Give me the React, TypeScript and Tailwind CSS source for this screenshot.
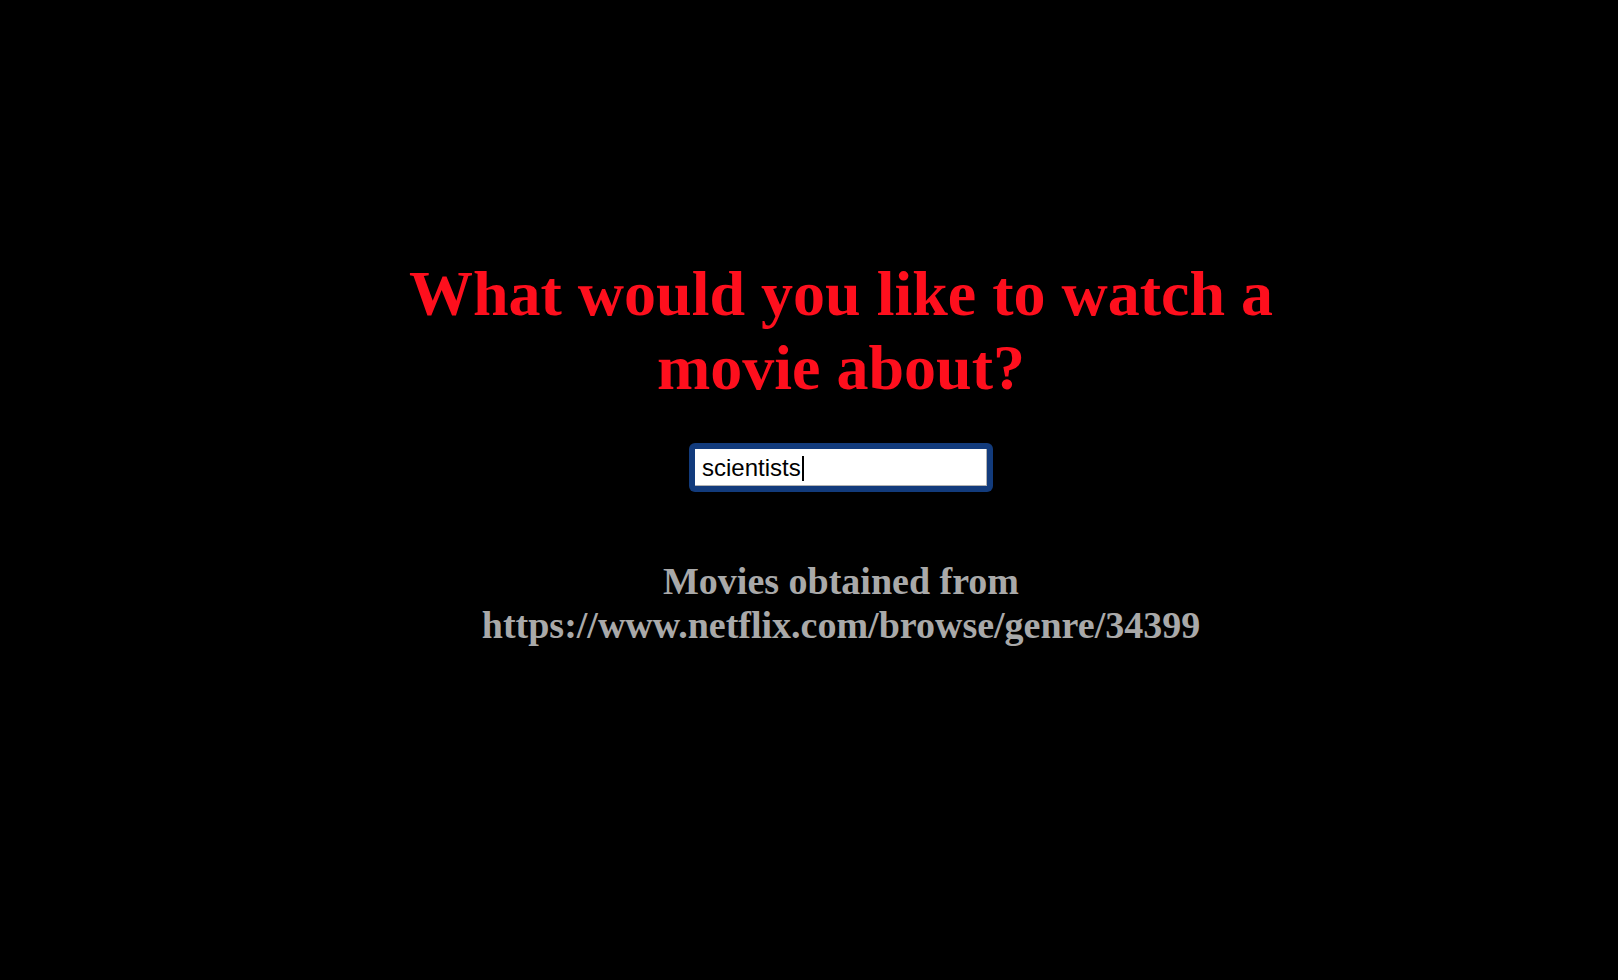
import React from "react";

export default function App() {
  return (
    <div className="min-h-screen w-full bg-black pl-[64px] text-center" style={{ fontFamily: '"Liberation Serif", "Times New Roman", serif' }}>
      <div className="flex flex-col items-center pt-[257px]">
        <h1 className="w-[900px] text-[64px] font-bold leading-[normal] text-[#fe0f1d]">
          What would you like to watch a movie about?
        </h1>
        <div className="mt-[38px] rounded-[6px] bg-[#123b7c] p-[6px]">
          <div
            className="flex h-[37px] w-[292px] items-center border-r border-b border-[#b3b3b3] bg-white pl-[7px] pt-[2px] text-left text-[24px] text-black"
            style={{ fontFamily: '"Liberation Sans", Arial, sans-serif' }}
          >
            <span>scientists</span>
            <span className="ml-[1px] inline-block h-[25px] w-[2px] bg-black" />
          </div>
        </div>
        <div className="mt-[67px] text-[38px] font-bold leading-[normal] text-[#a9a9a9]">
          Movies obtained from
          <br />
          https://www.netflix.com/browse/genre/34399
        </div>
      </div>
    </div>
  );
}
